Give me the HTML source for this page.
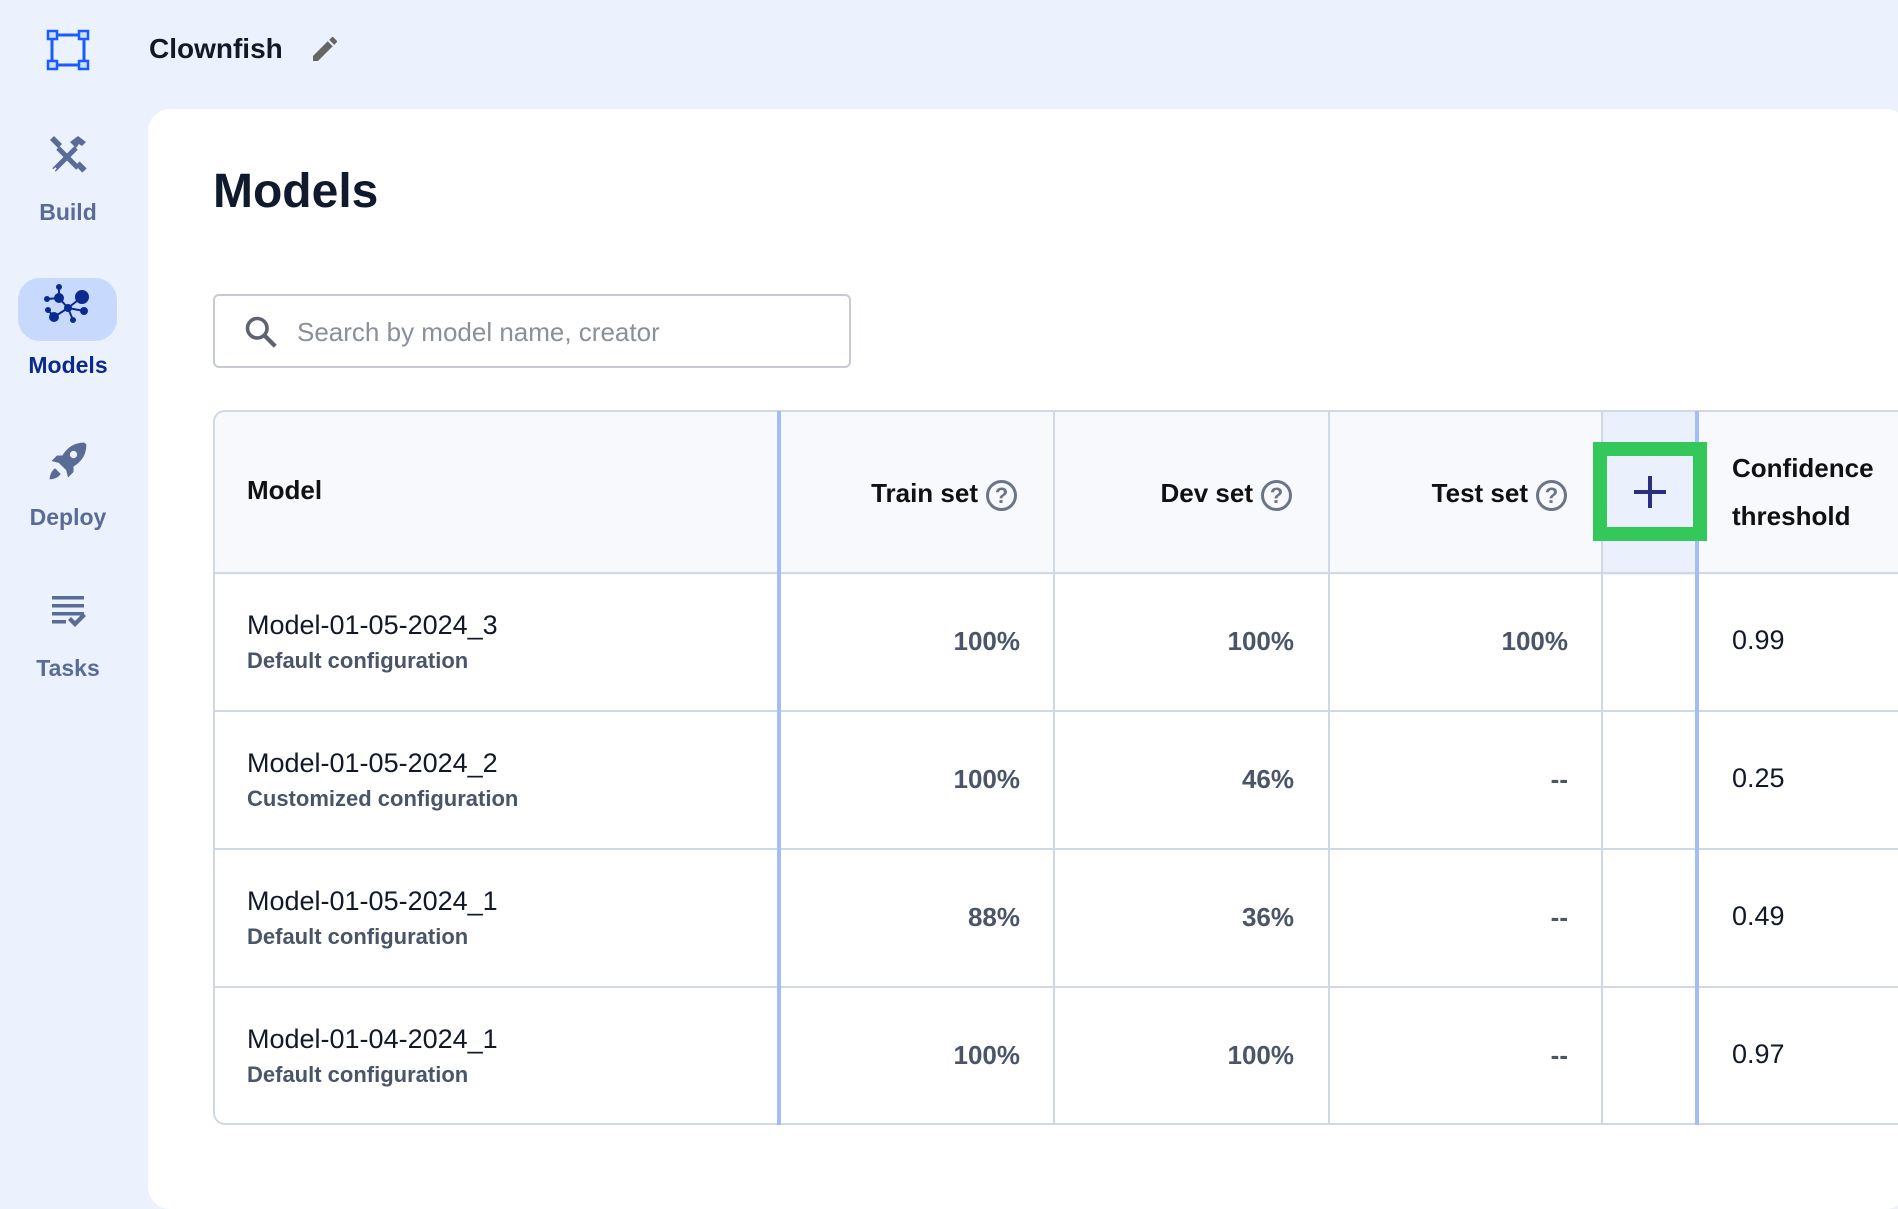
<!DOCTYPE html>
<html><head><meta charset="utf-8"><style>
*{margin:0;padding:0;box-sizing:border-box}
body{width:1898px;height:1143px;overflow:hidden;background:#ebf1fd;font-family:"Liberation Sans",sans-serif;position:relative;color:#111827}
.a{position:absolute}
.panel{left:148px;top:109px;width:1760px;height:1100px;background:#fff;border-radius:22px}
.nav{left:0;width:136px;text-align:center;font-size:23px;font-weight:bold;color:#5a6b95}
.th{font-size:26px;font-weight:bold;color:#111}
.pc{font-size:26px;color:#4a5568;text-align:right;font-weight:bold;width:200px}
.q{display:inline-block;width:31px;height:31px;border:3px solid #6b7588;border-radius:50%;font-size:22px;color:#6b7588;text-align:center;line-height:25px;font-weight:bold;vertical-align:middle;margin-left:8px}
.vl{width:2px;background:#cfd8e3}
.hl{height:2px;background:#cfd8e3;left:213px;width:1700px}
.mn{font-size:27px;color:#111827}
.sb{font-size:22px;font-weight:bold;color:#4a5568}
</style></head><body>
<svg class="a" style="left:46px;top:29px" width="44" height="42" viewBox="0 0 44 42"><rect x="6" y="6" width="32" height="30" fill="none" stroke="#1a5cff" stroke-width="3"/><g fill="#cfe0ff" stroke="#1a5cff" stroke-width="2.5"><rect x="2" y="2" width="9" height="8"/><rect x="33" y="2" width="9" height="8"/><rect x="2" y="32" width="9" height="8"/><rect x="33" y="32" width="9" height="8"/></g></svg>
<div class="a" style="left:149px;top:33px;font-size:28px;font-weight:bold">Clownfish</div>
<svg class="a" style="left:309px;top:33px" width="32" height="32" viewBox="0 0 24 24"><path d="M3 17.25V21h3.75L17.81 9.94l-3.75-3.75L3 17.25zM20.71 7.04a1 1 0 000-1.41l-2.34-2.34a1 1 0 00-1.41 0l-1.83 1.83 3.75 3.75 1.83-1.83z" fill="#666"/></svg>
<div class="a panel"></div>
<svg class="a" style="left:46px;top:134px" width="44" height="44" viewBox="0 0 44 44" fill="#5a6b95" stroke="#5a6b95"><path d="M4 6l4-4 8 8-4 4z" stroke="none"/><path d="M12 14l20 20" stroke-width="5"/><rect x="30" y="30" width="10" height="6" transform="rotate(45 35 33)" stroke="none"/><path d="M30 14l-22 22" stroke-width="5"/><path d="M24 8l8-6 8 6-4 4-3-2-3 4z" stroke="none"/><path d="M10 34l-4 4" stroke="#fff" stroke-width="2"/></svg>
<div class="a nav" style="top:199px">Build</div>
<div class="a" style="left:18px;top:278px;width:99px;height:63px;background:#c7d9fd;border-radius:22px"></div>
<svg class="a" style="left:42px;top:284px" width="52" height="52" viewBox="0 0 52 52" fill="#0b2a8f" stroke="#0b2a8f" stroke-width="2"><line x1="17" y1="14" x2="26" y2="24"/><line x1="26" y1="24" x2="40" y2="13"/><line x1="26" y1="24" x2="12" y2="33"/><line x1="26" y1="24" x2="42" y2="27"/><line x1="26" y1="24" x2="31" y2="36"/><line x1="17" y1="14" x2="17" y2="3"/><line x1="17" y1="14" x2="5" y2="15"/><line x1="12" y1="33" x2="6" y2="26"/><circle cx="17" cy="14" r="4"/><circle cx="40" cy="13" r="6"/><circle cx="26" cy="24" r="3"/><circle cx="12" cy="33" r="4"/><circle cx="42" cy="27" r="3"/><circle cx="31" cy="36" r="2"/><circle cx="17" cy="3" r="2"/><circle cx="5" cy="15" r="2"/><circle cx="6" cy="26" r="2"/></svg>
<div class="a nav" style="top:352px;color:#0b2a8f">Models</div>
<svg class="a" style="left:46px;top:439px" width="44" height="44" viewBox="0 0 24 24" fill="#5a6b95"><path d="M21 2c-5 0-9 2-12 7l-3 0-3 3 4 1 4 4 1 4 3-3 0-3c5-3 7-7 7-12zM15 6.5a2 2 0 110 4 2 2 0 010-4zM5 16c-2 1-3 4-3 6 2 0 5-1 6-3z"/></svg>
<div class="a nav" style="top:504px">Deploy</div>
<svg class="a" style="left:50px;top:594px" width="36" height="36" viewBox="0 0 36 36" fill="#5a6b95"><rect x="2" y="2" width="32" height="3.5"/><rect x="2" y="10" width="32" height="3.5"/><rect x="2" y="18" width="32" height="3.5"/><rect x="2" y="26" width="14" height="3.5"/><path d="M18 26l3-3 4 4 8-8 3 3-11 11z"/></svg>
<div class="a nav" style="top:655px">Tasks</div>
<div class="a" style="left:213px;top:164px;font-size:48px;font-weight:bold;color:#0f1a2e">Models</div>
<div class="a" style="left:213px;top:294px;width:638px;height:74px;border:2px solid #c6cbd3;border-radius:6px"></div>
<svg class="a" style="left:243px;top:314px" width="36" height="36" viewBox="0 0 24 24"><circle cx="9.5" cy="9.5" r="6.5" fill="none" stroke="#5c6470" stroke-width="2.4"/><path d="M14.5 14.5l7 7" stroke="#5c6470" stroke-width="2.8"/></svg>
<div class="a" style="left:297px;top:317px;font-size:26px;color:#8a9099">Search by model name, creator</div>
<div class="a" style="left:213px;top:410px;width:1700px;height:715px;border:2px solid #cfd8e3;border-radius:12px;overflow:hidden">
<div class="a" style="left:0;top:0;width:1700px;height:163px;background:#f7f9fc"></div>
<div class="a" style="left:1388px;top:0;width:95px;height:163px;background:#eaf1fd"></div>
</div>
<div class="a hl" style="top:572px"></div>
<div class="a hl" style="top:710px"></div>
<div class="a hl" style="top:848px"></div>
<div class="a hl" style="top:986px"></div>
<div class="a vl" style="left:1053px;top:411px;height:714px"></div>
<div class="a vl" style="left:1328px;top:411px;height:714px"></div>
<div class="a vl" style="left:1601px;top:411px;height:714px"></div>
<div class="a" style="left:777px;top:411px;width:4px;height:714px;background:#a3bdf8"></div>
<div class="a" style="left:1695px;top:411px;width:4px;height:714px;background:#a3bdf8"></div>
<div class="a th" style="left:247px;top:475px">Model</div>
<div class="a th" style="left:780px;width:237px;top:478px;text-align:right">Train set<span class="q">?</span></div>
<div class="a th" style="left:1055px;width:237px;top:478px;text-align:right">Dev set<span class="q">?</span></div>
<div class="a th" style="left:1330px;width:237px;top:478px;text-align:right">Test set<span class="q">?</span></div>
<div class="a" style="left:1593px;top:442px;width:114px;height:99px;border:14px solid #34c759;background:#eaf1fd"></div>
<div class="a" style="left:1634px;top:490px;width:32px;height:4px;background:#2b2f80"></div>
<div class="a" style="left:1648px;top:476px;width:4px;height:32px;background:#2b2f80"></div>
<div class="a th" style="left:1732px;top:444px;line-height:48px">Confidence<br>threshold</div>

<div class="a mn" style="left:247px;top:610px">Model-01-05-2024_3</div><div class="a sb" style="left:247px;top:648px">Default configuration</div>
<div class="a pc" style="left:820px;top:626px">100%</div><div class="a pc" style="left:1094px;top:626px">100%</div><div class="a pc" style="left:1368px;top:626px">100%</div><div class="a mn" style="left:1732px;top:625px">0.99</div>

<div class="a mn" style="left:247px;top:748px">Model-01-05-2024_2</div><div class="a sb" style="left:247px;top:786px">Customized configuration</div>
<div class="a pc" style="left:820px;top:764px">100%</div><div class="a pc" style="left:1094px;top:764px">46%</div><div class="a pc" style="left:1368px;top:764px">--</div><div class="a mn" style="left:1732px;top:763px">0.25</div>

<div class="a mn" style="left:247px;top:886px">Model-01-05-2024_1</div><div class="a sb" style="left:247px;top:924px">Default configuration</div>
<div class="a pc" style="left:820px;top:902px">88%</div><div class="a pc" style="left:1094px;top:902px">36%</div><div class="a pc" style="left:1368px;top:902px">--</div><div class="a mn" style="left:1732px;top:901px">0.49</div>

<div class="a mn" style="left:247px;top:1024px">Model-01-04-2024_1</div><div class="a sb" style="left:247px;top:1062px">Default configuration</div>
<div class="a pc" style="left:820px;top:1040px">100%</div><div class="a pc" style="left:1094px;top:1040px">100%</div><div class="a pc" style="left:1368px;top:1040px">--</div><div class="a mn" style="left:1732px;top:1039px">0.97</div>
</body></html>
